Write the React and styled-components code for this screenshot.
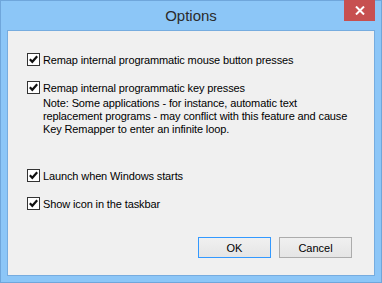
import React from 'react';
import styled, { createGlobalStyle } from 'styled-components';

const GlobalStyle = createGlobalStyle`
  html, body {
    margin: 0;
    padding: 0;
    background: #ffffff;
  }
`;

const Window = styled.div`
  width: 382px;
  height: 283px;
  box-sizing: border-box;
  background: #8cc6f7;
  border: 1px solid #6fa6db;
  display: flex;
  flex-direction: column;
  font-family: 'Liberation Sans', Arial, sans-serif;
`;

const TitleBar = styled.div`
  height: 29px;
  display: flex;
  align-items: flex-start;
  position: relative;
`;

const Title = styled.div`
  flex: 1;
  text-align: center;
  font-size: 15px;
  color: #2b2b2b;
  padding-top: 6px;
`;

const CloseButton = styled.div`
  position: absolute;
  top: -1px;
  right: 6px;
  width: 31px;
  height: 21px;
  background: #c75050;
  display: flex;
  align-items: center;
  justify-content: center;
`;

const Client = styled.div`
  flex: 1;
  margin: 0 6px 6px 6px;
  background: #f0f0f0;
  border: 1px solid #76acdf;
  display: flex;
  flex-direction: column;
  padding: 22px 22px 17px 19px;
  font-size: 11px;
  letter-spacing: -0.12px;
  color: #000;
  white-space: nowrap;
`;

const Options = styled.div`
  display: flex;
  flex-direction: column;
  flex: 1;
`;

const Row = styled.label`
  display: flex;
  align-items: center;
  gap: 3px;
  height: 13px;
  margin-bottom: ${p => p.$gap || 0}px;
`;

const Box = styled.span`
  width: 13px;
  height: 13px;
  box-sizing: border-box;
  border: 1px solid #333333;
  background: #ffffff;
  display: flex;
  align-items: center;
  justify-content: center;
  flex: none;
`;

const Note = styled.p`
  margin: 3px 0 33px 16px;
  line-height: 13px;
`;

const Buttons = styled.div`
  display: flex;
  justify-content: flex-end;
  gap: 8px;
`;

const Button = styled.button`
  width: 73px;
  height: 21px;
  box-sizing: border-box;
  border: 1px solid ${p => (p.$default ? '#3399ff' : '#acacac')};
  background: linear-gradient(#f0f0f0, #e5e5e5);
  font-family: inherit;
  font-size: 11px;
  color: #000;
  padding: 0;
`;

function Check() {
  return (
    <Box>
      <svg width="9" height="9" viewBox="0 0 9 9">
        <path d="M0.8 4.3 L3.3 6.8 L8.2 1.2" fill="none" stroke="#111" strokeWidth="2.2" />
      </svg>
    </Box>
  );
}

export default function App() {
  return (
    <>
      <GlobalStyle />
      <Window>
        <TitleBar>
          <Title>Options</Title>
          <CloseButton>
            <svg width="10" height="9" viewBox="0 0 10 9">
              <path d="M1 0.5 L9 8.5 M9 0.5 L1 8.5" stroke="#fff" strokeWidth="2" />
            </svg>
          </CloseButton>
        </TitleBar>
        <Client>
          <Options>
            <Row $gap={15}>
              <Check />
              Remap internal programmatic mouse button presses
            </Row>
            <Row>
              <Check />
              Remap internal programmatic key presses
            </Row>
            <Note>
              Note: Some applications - for instance, automatic text
              <br />
              replacement programs - may conflict with this feature and cause
              <br />
              Key Remapper to enter an infinite loop.
            </Note>
            <Row $gap={15}>
              <Check />
              Launch when Windows starts
            </Row>
            <Row>
              <Check />
              Show icon in the taskbar
            </Row>
          </Options>
          <Buttons>
            <Button $default>OK</Button>
            <Button>Cancel</Button>
          </Buttons>
        </Client>
      </Window>
    </>
  );
}
